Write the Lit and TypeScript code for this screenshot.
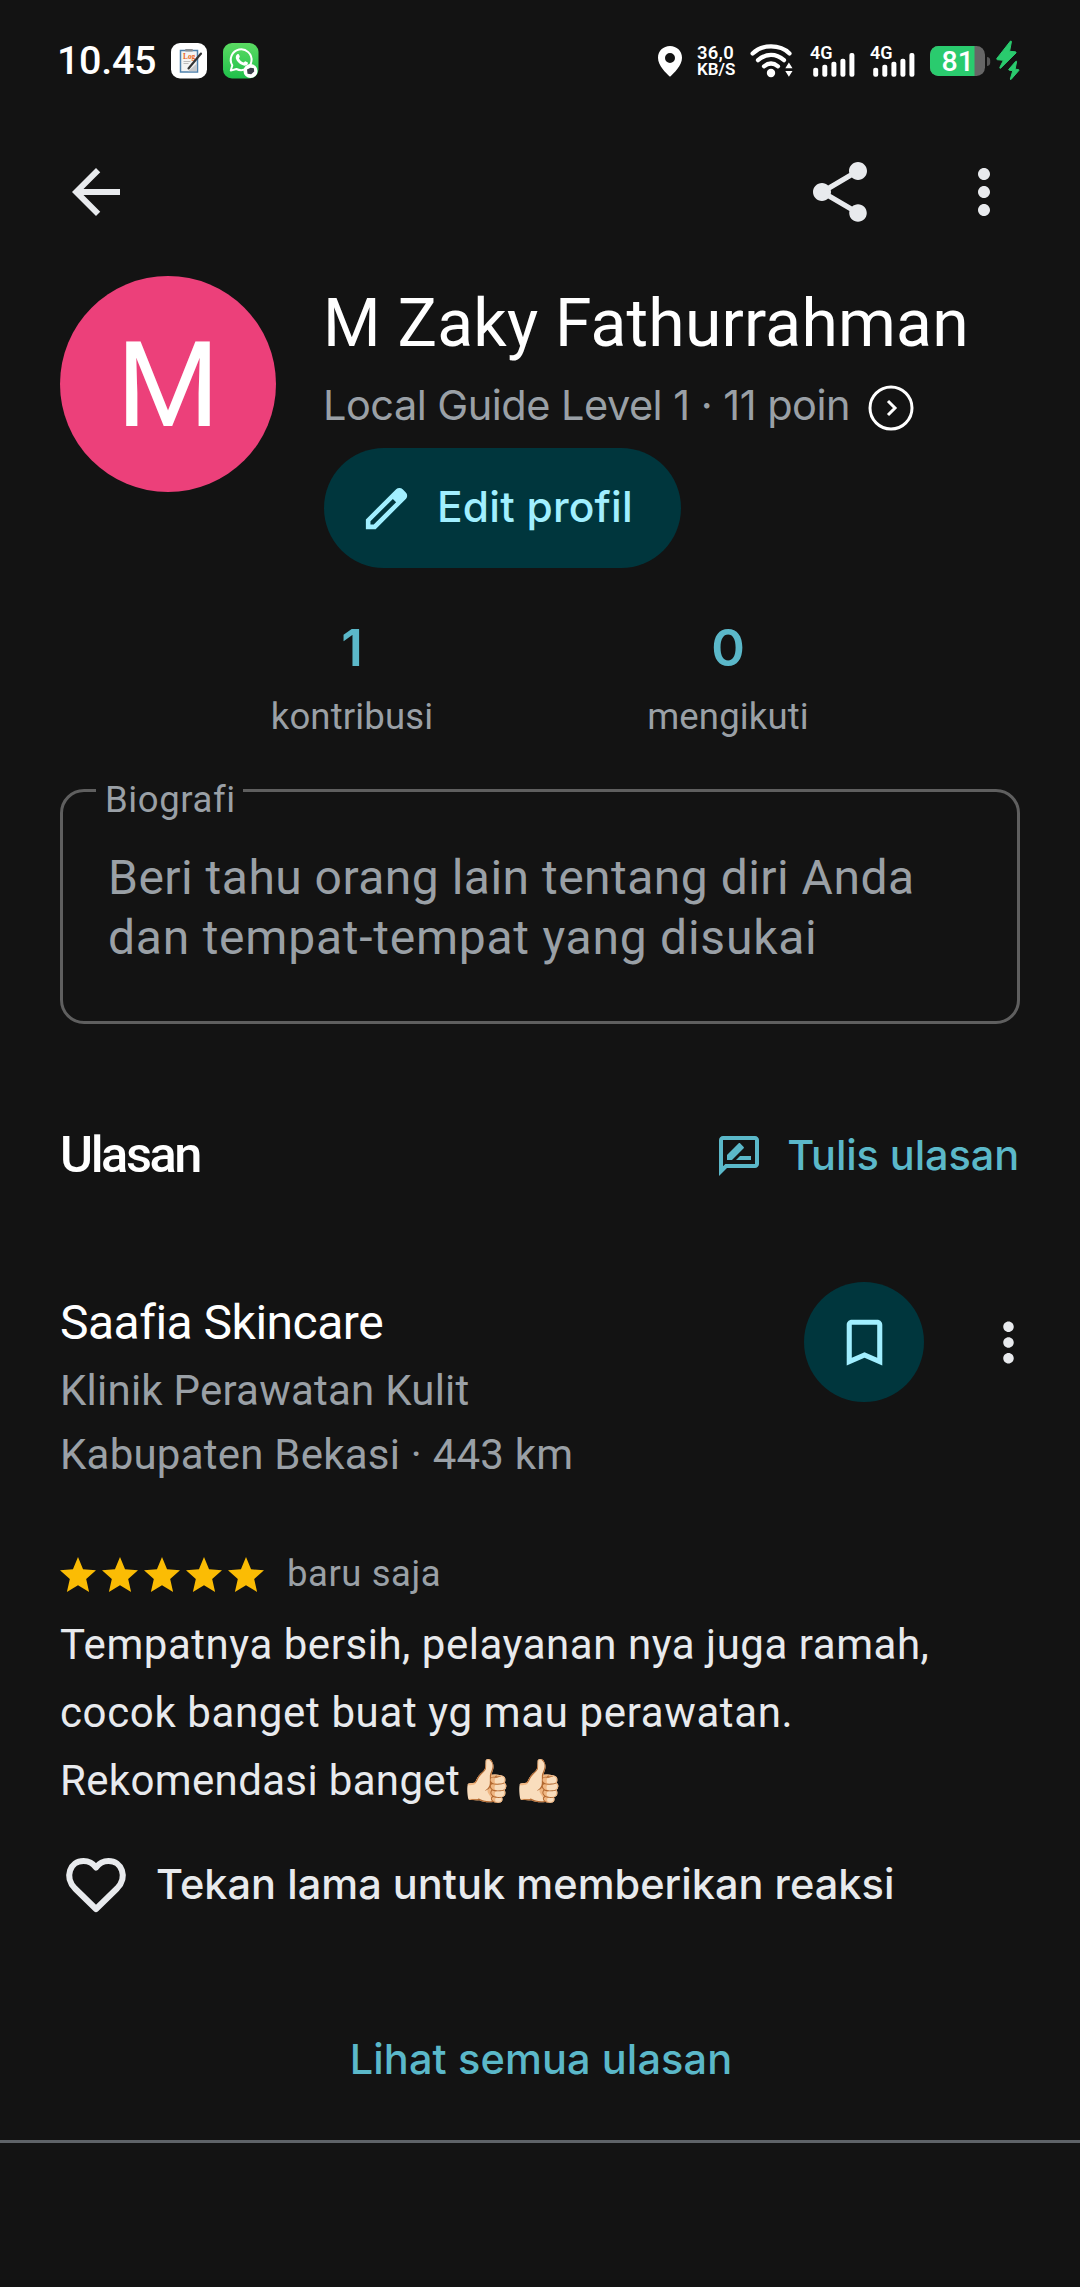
import { LitElement, html, css, svg } from "lit";
import { customElement } from "lit/decorators.js";

const icon = (size: number, d: string) =>
  html`<svg class="icon" width=${size} height=${size} viewBox="0 0 24 24" fill="currentColor"><path d=${d}></path></svg>`;

const BACK = "M20 11H7.83l5.59-5.59L12 4l-8 8 8 8 1.41-1.41L7.83 13H20v-2z";
const SHARE =
  "M18 16.08c-.76 0-1.44.3-1.96.77L8.91 12.7c.05-.23.09-.46.09-.7s-.04-.47-.09-.7l7.05-4.11c.54.5 1.25.81 2.04.81 1.66 0 3-1.34 3-3s-1.34-3-3-3-3 1.34-3 3c0 .24.04.47.09.7L8.04 9.81C7.5 9.31 6.79 9 6 9c-1.66 0-3 1.34-3 3s1.34 3 3 3c.79 0 1.5-.31 2.04-.81l7.12 4.16c-.05.21-.08.43-.08.65 0 1.61 1.31 2.92 2.92 2.92s2.92-1.31 2.92-2.92-1.31-2.92-2.92-2.92z";
const MORE =
  "M12 8c1.1 0 2-.9 2-2s-.9-2-2-2-2 .9-2 2 .9 2 2 2zm0 2c-1.1 0-2 .9-2 2s.9 2 2 2 2-.9 2-2-.9-2-2-2zm0 6c-1.1 0-2 .9-2 2s.9 2 2 2 2-.9 2-2-.9-2-2-2z";
const EDIT =
  "M5 19h1.425L16.2 9.225L14.775 7.8L5 17.575zm-2 2v-4.25L16.2 3.575q.3-.275.663-.425t.762-.15t.775.15t.65.45L20.425 5q.3.275.438.65T21 6.4q0 .4-.137.763t-.438.662L7.25 21z";
const REVIEW =
  "M20 2H4c-1.1 0-2 .9-2 2v18l4-4h14c1.1 0 2-.9 2-2V4c0-1.1-.9-2-2-2zm0 14H5.17L4 17.17V4h16v12zM6 14h2.5l5.85-5.85c.2-.2.2-.5 0-.7l-1.8-1.8c-.2-.2-.5-.2-.7 0L6 11.5zM10.5 14H18v-2h-5.5z";
const BOOKMARK =
  "M17 3H7c-1.1 0-2 .9-2 2v16l7-3 7 3V5c0-1.1-.9-2-2-2zm0 15l-5-2.18L7 18V5h10v13z";

@customElement("status-bar")
export class StatusBar extends LitElement {
  static styles = css`
    :host {
      display: flex;
      align-items: center;
      height: 120px;
      box-sizing: border-box;
      padding: 2px 60px 0 57px;
      font-family: Roboto, sans-serif;
      color: #fff;
    }
    svg { display: block; flex: none; overflow: visible; }
    .time { width: 114px; font-size: 39.5px; font-weight: 500; line-height: 48px; letter-spacing: -0.33px; }
    .apps { display: flex; gap: 16px; }
    .tray { display: flex; margin-left: auto; align-items: center; }
    .speed { width: 38px; margin: 0 15px; font-weight: 600; font-size: 17.6px; line-height: 17px; white-space: nowrap; }
    .speed .num { font-size: 18.4px; letter-spacing: 0.3px; }
    .speed .unit { font-size: 17px; }
    .sig { margin-right: 14px; }
    .wifi { margin-right: 17px; }
    .bat { margin-right: 5px; }
    text { font-family: Roboto, sans-serif; }
    .log { font-family: "Liberation Serif", serif; }
  `;

  signal() {
    const bars = [[3.2, 24.7], [12.3, 21.8], [21.4, 18.8], [30.4, 15.8], [39.4, 10]];
    return html`<svg class="sig" width="46" height="36" viewBox="0 0 46 36" fill="#fff">
      <text x="0" y="15.500" font-size="18" font-weight="600">4G</text>
      ${bars.map(([x, y]) => svg`<rect x=${x} y=${y} width="5" height=${33.8 - y} rx="2"></rect>`)}
    </svg>`;
  }

  render() {
    return html`
      <div class="time">10.45</div>
      <div class="apps">
        <svg width="36" height="36" viewBox="0 0 36 36">
          <rect width="36" height="35.5" rx="9" fill="#fff"></rect>
          <rect x="9.5" y="7.5" width="17" height="21.5" fill="#f4f4f4" stroke="#4d81ad" stroke-width="1.5"></rect>
          <rect x="14" y="6" width="8" height="2.6" rx="1" fill="#8b8f94"></rect>
          <text class="log" x="12" y="15.6" font-size="7.4" font-weight="700" fill="#ec6a26">Log</text>
          <path d="M12.5 18.5h7M12.5 20.5h5" stroke="#b5b5b5" stroke-width=".9"></path>
          <path d="M17 28.3l9-8v8z" fill="#c5c8cc"></path>
          <path d="M17.5 25.5L30 10.5" stroke="#333" stroke-width="2.1" stroke-linecap="round"></path>
        </svg>
        <svg width="36" height="36" viewBox="0 0 36 36">
          <defs><linearGradient id="g" x1="0" y1="0" x2="0" y2="1"><stop offset="0" stop-color="#5bdb62"></stop><stop offset="1" stop-color="#1fc04b"></stop></linearGradient></defs>
          <rect width="35.5" height="35.5" rx="9" fill="url(#g)"></rect>
          <path d="M7.8 27.6l1.5-5.4A10.4 10.4 0 1 1 13.4 26z" fill="none" stroke="#fff" stroke-width="2" stroke-linejoin="round"></path>
          <path d="M14.3 11.3c.7-.6 1.4-.4 1.7.3l.8 2c.2.6-.9 1.5-.8 1.8 1 2 2.3 3.2 4.5 4.1.4.1 1.3-1.5 1.8-1.3l2.2 1.1c.7.4.4 1.6-.1 2.3-1 1.2-2.9 1.4-5 .5-3.3-1.4-5.7-4-6.500-6.700-.4-1.500.2-3.100 1.400-4.100z" fill="#fff"></path>
          <circle cx="27.5" cy="28" r="7" fill="#fff"></circle>
          <path d="M24 26.5l3.5-1.8 3.4.6.3 3.2-3 2.800-3.700-.6z" fill="#3a4049"></path>
        </svg>
      </div>
      <div class="tray">
        <svg width="24" height="36" viewBox="0 0 24 36"><path fill="#fff" fill-rule="evenodd" d="M12 3C5.3 3 0 8.1 0 14.7 0 22.5 8 30 12 33.8 16 30 24 22.5 24 14.7 24 8.1 18.7 3 12 3zm0 7a5 5 0 1 1 0 10 5 5 0 0 1 0-10z"></path></svg>
        <div class="speed"><div class="num">36,0</div><div class="unit">KB/S</div></div>
        <svg class="wifi" width="43" height="36" viewBox="0 0 43 36" fill="none" stroke="#fff" stroke-width="4.2" stroke-linecap="round">
          <path d="M2.6 10.4C12 1 30 1 39.5 10.4M8 17.2c8-7 18-7 26 0M14 23.3c4.500-3.600 9.500-3.600 14 0"></path>
          <circle cx="21" cy="30" r="4.2" fill="#fff" stroke="none"></circle>
          <path d="M35.3 25.3L38.9 19.5l3.6 5.8zM35.3 28L38.9 33.8l3.6-5.8z" fill="#fff" stroke="none"></path>
        </svg>
        ${this.signal()} ${this.signal()}
        <svg class="bat" width="61" height="36" viewBox="0 0 61 36">
          <clipPath id="b"><rect y="3" width="55" height="30" rx="8.5"></rect></clipPath>
          <g clip-path="url(#b)"><rect y="3" width="55" height="30" fill="#666"></rect><rect y="3" width="44.5" height="30" fill="#2acb6e"></rect></g>
          <path d="M57 14v9c2 0 3.2-1.5 3.2-3.5v-2C60.2 15.5 59 14 57 14z" fill="#555"></path>
          <text x="27.8" y="28.4" font-size="28.5" font-weight="500" fill="#fff" text-anchor="middle">81</text>
        </svg>
        <svg width="24" height="40" viewBox="0 0 24 40" fill="#2acb6e" stroke="#2acb6e" stroke-width="1" stroke-linejoin="round">
          <path d="M14.500 0L.8 17.500q-.3 1 .6 1.200l6 .6L3.800 26.500q-.2 1.300 1 .5L20 12q.4-1-.6-1.200l-5.800-.5L15.400 .8q0-1.200-.9-.8z"></path>
          <path d="M19.800 20.300l-7 8q-.3.800.4.900l3.600.5-2.500 8.300q0 .8.800.4l7.800-9q.3-.7-.4-.8l-3.400-.4 1.500-7.500q0-.9-.8-.4z"></path>
        </svg>
      </div>`;
  }
}

@customElement("app-root")
export class AppRoot extends LitElement {
  static styles = css`
    :host {
      display: block;
      width: 1080px;
      height: 2287px;
      overflow: hidden;
      background: #131313;
      color: #fff;
      font-family: Roboto, sans-serif;
      white-space: nowrap;
    }
    .icon, svg { display: block; flex: none; }
    .med { font-family: Inter, Roboto, sans-serif; font-weight: 500; }
    .appbar { display: flex; height: 144px; padding: 0 60px; align-items: center; gap: 72px; color: #e8eaed; }
    .appbar .back { margin-right: auto; }
    .profile { display: flex; gap: 48px; padding: 12px 60px 0; }
    .avatar { box-sizing: border-box; width: 216px; height: 216px; border-radius: 50%; background: #ec407a; display: flex; align-items: center; justify-content: center; font-size: 118px; line-height: 212px; padding-top: 4px; }
    .who { padding-top: 12px; display: flex; flex-direction: column; align-items: flex-start; }
    .name { font-size: 66px; line-height: 72px; letter-spacing: 0.2px; margin-left: -1px; }
    .level { display: flex; margin-top: 18px; height: 54px; font-family: Inter, Roboto, sans-serif; font-size: 41.5px; line-height: 53px; letter-spacing: -0.52px; color: #9aa0a6; align-items: center; gap: 18px; margin-left: -1px; }
    .level svg { margin-top: 5px; }
    .edit { display: flex; align-items: center; gap: 23px; box-sizing: border-box; width: 357px; height: 120px; margin-top: 16px; padding-left: 35px; border-radius: 60px; background: #00363d; color: #a1efff; font-size: 42.5px; letter-spacing: 0.2px; }
    .edit span { padding-bottom: 3px; }
    .stats { display: grid; grid-template-columns: 376px 376px; justify-content: center; margin-top: 50px; text-align: center; }
    .stats .count { font-size: 51px; line-height: 60px; font-weight: 600; color: #5bb8c9; }
    .label { margin-top: 15px; font-size: 36.5px; line-height: 48px; letter-spacing: 0.15px; color: #9aa0a6; }
    .bio { position: relative; box-sizing: border-box; height: 235px; margin: 48px 60px 0; border: 3px solid #5f5f5f; border-radius: 24px; padding: 56px 0 0 45px; color: #9aa0a6; font-size: 48px; line-height: 60px; letter-spacing: 0.48px; }
    .bio .second { letter-spacing: 0.76px; }
    .bio .legend { position: absolute; left: 33px; top: -14px; box-sizing: border-box; width: 147px; padding-left: 9px; background: #131313; font-size: 36.5px; line-height: 44px; letter-spacing: 0.6px; }
    .heading { display: flex; justify-content: space-between; height: 72px; line-height: 70px; margin: 96px 61px 0 60px; }
    .heading .title { font-size: 50.5px; font-weight: 500; letter-spacing: -2.4px; }
    .write { display: flex; align-items: center; gap: 24px; font-size: 41.5px; letter-spacing: -0.11px; color: #5bb8c9; }
    .write span { padding-bottom: 2px; }
    .place { display: flex; margin: 90px 40px 0 60px; height: 267px; align-items: flex-start; }
    .info { padding-top: 11px; flex: 1; font-size: 42px; line-height: 64px; color: #9aa0a6; letter-spacing: 0.23px; }
    .info .pname { font-size: 48px; line-height: 60px; letter-spacing: -0.5px; color: #fff; margin-bottom: 6px; }
    .save { width: 120px; height: 120px; border-radius: 50%; background: #00363d; color: #a1efff; display: flex; align-items: center; justify-content: center; margin-right: 53px; }
    .more { height: 120px; display: flex; align-items: center; color: #e8eaed; }
    .rating { display: flex; align-items: center; height: 48px; padding: 0 60px; gap: 23px; font-size: 36.5px; letter-spacing: 0.55px; color: #9aa0a6; }
    .stars { display: flex; gap: 6px; padding-top: 2px; }
    .review { margin: 14px 60px 0; font-size: 42px; line-height: 68px; height: 204px; color: #e8eaed; letter-spacing: 0.54px; }
    .review .l2 { letter-spacing: 0.63px; }
    .review .l3 { letter-spacing: 0.35px; }
    .react { display: flex; align-items: center; gap: 24px; height: 72px; margin: 34px 60px 0; color: #e8eaed; font-size: 41.5px; letter-spacing: 0.03px; }
    .react span { padding-bottom: 2px; }
    .all { margin-top: 108px; padding-left: 2px; text-align: center; font-size: 41.5px; line-height: 60px; letter-spacing: 0.1px; color: #5bb8c9; }
    .rule { height: 3px; margin-top: 51px; background: #5f6368; }
  `;

  render() {
    return html`
      <status-bar></status-bar>
      <div class="appbar"><div class="back">${icon(72, BACK)}</div>${icon(72, SHARE)}${icon(72, MORE)}</div>
      <div class="profile">
        <div class="avatar">M</div>
        <div class="who">
          <div class="name">M Zaky Fathurrahman</div>
          <div class="level">Local Guide Level 1 · 11 poin
            <svg width="46" height="46" viewBox="0 0 46 46" fill="none" stroke="#fff" stroke-width="3">
              <circle cx="23" cy="23" r="21"></circle><path d="M20 16l7 7-7 7"></path>
            </svg>
          </div>
          <div class="edit med">${icon(55, EDIT)}<span>Edit profil</span></div>
        </div>
      </div>
      <div class="stats">
        <div><div class="count med">1</div><div class="label">kontribusi</div></div>
        <div><div class="count med">0</div><div class="label">mengikuti</div></div>
      </div>
      <div class="bio">
        <div class="legend">Biografi</div>
        <div>Beri tahu orang lain tentang diri Anda</div>
        <div class="second">dan tempat-tempat yang disukai</div>
      </div>
      <div class="heading">
        <div class="title">Ulasan</div>
        <div class="write med">${icon(48, REVIEW)}<span>Tulis ulasan</span></div>
      </div>
      <div class="place">
        <div class="info">
          <div class="pname">Saafia Skincare</div>
          <div>Klinik Perawatan Kulit</div>
          <div>Kabupaten Bekasi · 443 km</div>
        </div>
        <div class="save">${icon(61, BOOKMARK)}</div>
        <div class="more">${icon(63, MORE)}</div>
      </div>
      <div class="rating">
        <div class="stars">
          ${[1, 2, 3, 4, 5].map(() => html`<svg width="36" height="35" viewBox="2 2 20 19" preserveAspectRatio="none" fill="#fbbc04"><path d="M12 17.27L18.18 21l-1.64-7.03L22 9.24l-7.19-.61L12 2 9.19 8.63 2 9.24l5.46 4.73L5.82 21z"></path></svg>`)}
        </div>
        <div>baru saja</div>
      </div>
      <div class="review">
        <div>Tempatnya bersih, pelayanan nya juga ramah,</div>
        <div class="l2">cocok banget buat yg mau perawatan.</div>
        <div class="l3">Rekomendasi banget👍🏻👍🏻</div>
      </div>
      <div class="react med">
        <svg width="72" height="72" viewBox="0 0 72 72" fill="none" stroke="currentColor" stroke-width="6" stroke-linejoin="round">
          <path d="M36 60L15 39.5C4 28 10 12 23.5 12C29 12 33.5 15 36 18.5C38.5 15 43 12 48.5 12C62 12 68 28 57 39.5Z"></path>
        </svg>
        <span>Tekan lama untuk memberikan reaksi</span>
      </div>
      <div class="all med">Lihat semua ulasan</div>
      <div class="rule"></div>`;
  }
}
